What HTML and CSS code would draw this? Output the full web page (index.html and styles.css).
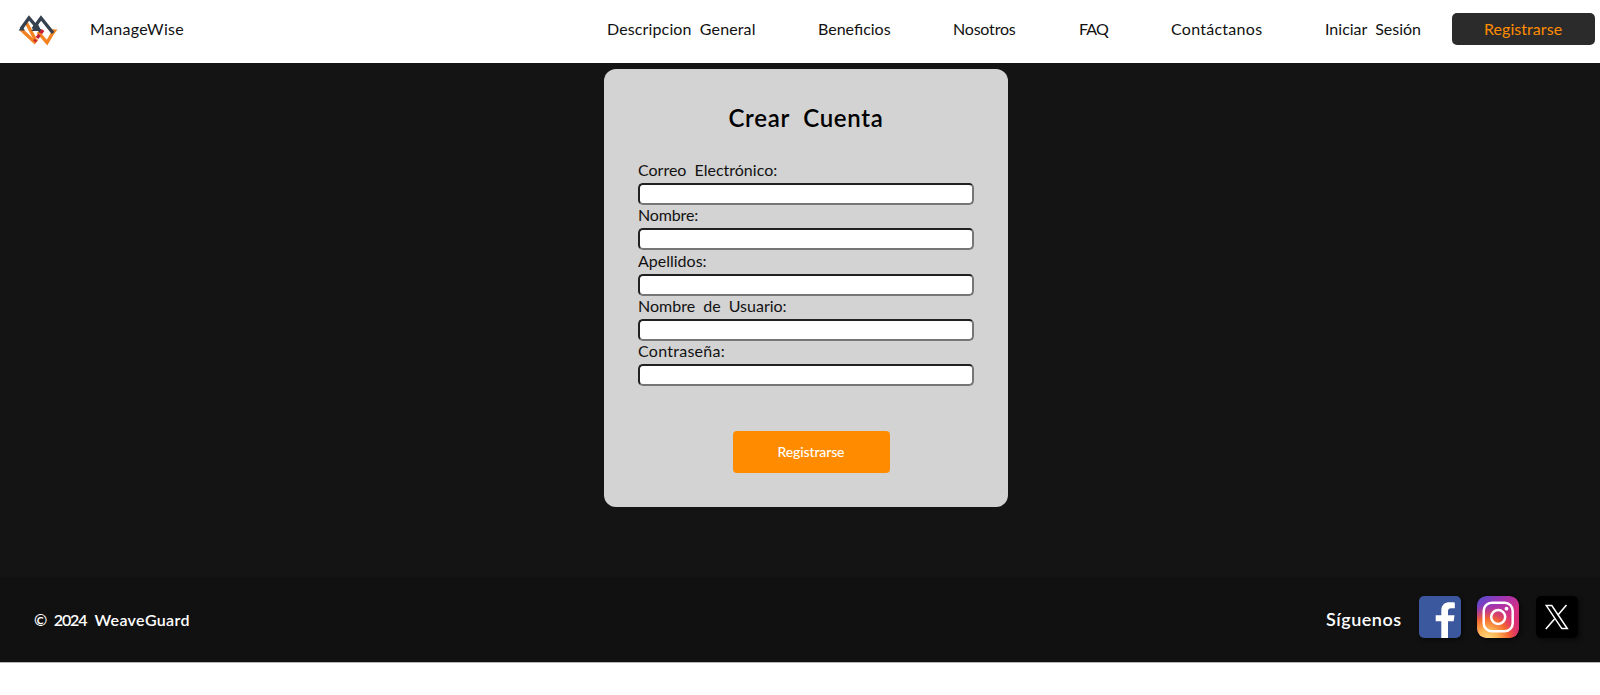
FILE: index.html
```html
<!DOCTYPE html>
<html lang="es">
<head>
<meta charset="utf-8">
<title>ManageWise</title>
<link rel="stylesheet" href="styles.css">
</head>
<body>
<header class="header">
  <svg class="logo" viewBox="0 0 44 36" fill="none" stroke-width="3.400">
    <path d="M5 17.500 18.500 30 21 27" stroke="#f58220"/>
    <path d="M10.500 11 19 27M22 20 31 30.500 38.500 18" stroke="#f58220"/>
    <path d="M35 17.500H41.500L38 22Z" fill="#f58220"/>
    <path d="M5 17 13 6 25 20" stroke="#35414f"/>
    <path d="M2.500 18.500 6 14 9 18.500ZM15 19 22 12 25 19Z" fill="#35414f"/>
    <path d="M17 17 25 6 37 21" stroke="#35414f"/>
    <path d="M27 18 18.500 29.500" stroke="#c52233" stroke-dasharray="4 2"/>
  </svg>
  <span class="brand">ManageWise</span>
  <nav class="nav">
    <a class="link general">Descripcion General</a>
    <a class="link benefits">Beneficios</a>
    <a class="link about">Nosotros</a>
    <a class="link faq">FAQ</a>
    <a class="link contact">Contáctanos</a>
    <a class="link login">Iniciar Sesión</a>
    <a class="signup"><span>Registrarse</span></a>
  </nav>
</header>
<main class="main">
  <form class="card">
    <h2 class="title">Crear Cuenta</h2>
    <label class="field"><span class="l-mail">Correo Electrónico:</span><input class="input" type="email"></label>
    <label class="field"><span class="l-name">Nombre:</span><input class="input" type="text"></label>
    <label class="field"><span class="l-last">Apellidos:</span><input class="input" type="text"></label>
    <label class="field"><span class="l-user">Nombre de Usuario:</span><input class="input" type="text"></label>
    <label class="field"><span class="l-pass">Contraseña:</span><input class="input" type="password"></label>
    <button class="submit" type="button">Registrarse</button>
  </form>
</main>
<footer class="footer">
  <span class="copy">© <span class="year">2024</span> <span class="company">WeaveGuard</span></span>
  <div class="social">
    <span class="follow">Síguenos</span>
    <svg class="icon" viewBox="0 0 42 42"><rect width="42" height="42" rx="4" fill="#3b579d"/><path fill="#fff" d="M22.300 42V25.300H16.700V19.200H22.300V14.500C22.300 8.800 25.700 6.200 30.800 6.200 33.200 6.200 35.200 6.400 35.800 6.500V12.200H32.300C29.500 12.200 29 13.500 29 15.500V19.200H35.500L34.700 25.300H29V42Z"/></svg>
    <svg class="icon insta" viewBox="0 0 42 42">
      <defs>
        <linearGradient id="base" x1="0" y1="0" x2="1" y2="1"><stop offset="0" stop-color="#4f50d0"/><stop offset=".3" stop-color="#9b36b7"/><stop offset=".65" stop-color="#d92e7f"/><stop offset="1" stop-color="#d7296f"/></linearGradient>
        <radialGradient id="warm" cx=".25" cy="1.05" r=".85"><stop offset="0" stop-color="#ffdc80"/><stop offset=".3" stop-color="#fdb554"/><stop offset=".6" stop-color="#f4682f"/><stop offset="1" stop-color="#e1306c" stop-opacity="0"/></radialGradient>
      </defs>
      <rect width="42" height="42" rx="9" fill="url(#base)"/><rect width="42" height="42" rx="9" fill="url(#warm)"/>
      <g fill="none" stroke="#fff" stroke-width="2.500"><rect x="6.700" y="6.700" width="29" height="28.500" rx="8"/><circle cx="21.200" cy="21" r="7"/></g><circle cx="29.500" cy="12.700" r="1.900" fill="#fff"/>
    </svg>
    <svg class="icon" viewBox="0 0 42 42"><rect width="42" height="42" rx="4" fill="#000"/><path d="M10.300 9.600H15.800L31.300 32.600H25.800Z" fill="none" stroke="#fff" stroke-width="1.500"/><path d="M30.500 9 21.700 19.200M18.500 23 9.800 33" stroke="#fff" stroke-width="1.600"/></svg>
  </div>
</footer>
</body>
</html>
```
FILE: styles.css
```css
* { box-sizing: border-box; }
body { margin: 0; background: #fff; color: #111; font: 16px/20px Lato, "Open Sans", sans-serif; word-spacing: 4px; }
.header { display: flex; align-items: center; height: 63px; padding: 0 5px 5px 16px; }
.logo { width: 44px; height: 36px; margin-top: 1px; }
.brand { margin-left: 30px; letter-spacing: .32px; white-space: nowrap; }
.nav { display: flex; align-items: center; margin-left: auto; white-space: nowrap; }
.link { margin-right: 62px; }
.general { width: 149px; letter-spacing: .13px; }
.benefits { width: 73px; }
.about { width: 64px; letter-spacing: -.2px; }
.faq { width: 30px; letter-spacing: -.8px; }
.contact { width: 92px; letter-spacing: .27px; }
.login { width: 96px; margin-right: 31px; }
.signup { width: 143px; height: 32px; padding: 6px 0 0 32px; border-radius: 5px; background: #2b2b2b; color: #ff8c00; letter-spacing: .05px; }
.main { height: 514px; padding-top: 6px; background: #141414; }
.card { display: flex; flex-direction: column; width: 403.500px; height: 437.500px; margin-left: 604px; padding: 33px 33.500px 33px 34px; border-radius: 12px; background: #d3d3d3; }
.title { margin: 0 0 26px; font-size: 24px; line-height: 32px; font-weight: 600; color: #000; text-align: center; letter-spacing: .7px; word-spacing: 7px; }
.field { display: block; height: 45.300px; }
.field span { display: block; height: 23px; white-space: nowrap; }
.l-name { letter-spacing: -.15px; }
.l-pass { letter-spacing: .27px; }
.input { display: block; width: 336px; height: 22px; border: 2px inset #767676; border-radius: 5px; background: #fff; }
.submit { width: 157px; height: 42px; margin: 45px 0 0 95px; padding: 0 1px 1px 0; border: 0; border-radius: 4px; background: #ff8c00; color: #fff; font: 500 14px/20px Lato, sans-serif; letter-spacing: -.13px; }
.footer { display: flex; align-items: center; justify-content: space-between; height: 86px; padding: 4px 22px 0 34px; border-bottom: 1px solid #b5b5b5; background: #111; color: #fff; }
.copy { font-weight: 600; margin-top: -3px; white-space: nowrap; }
.year { margin-left: -1.500px; letter-spacing: -1.100px; }
.company { letter-spacing: .35px; }
.social { display: flex; align-items: center; margin-top: -9px; }
.follow { width: 76px; margin: 3px 17px 0 0; font-size: 18px; font-weight: 600; letter-spacing: .5px; }
.icon { width: 42px; height: 42px; border-radius: 5px; box-shadow: 2px 2px 4px rgba(0, 0, 0, .5); }
.insta { margin: 0 17px 0 16px; border-radius: 9px; }
```
